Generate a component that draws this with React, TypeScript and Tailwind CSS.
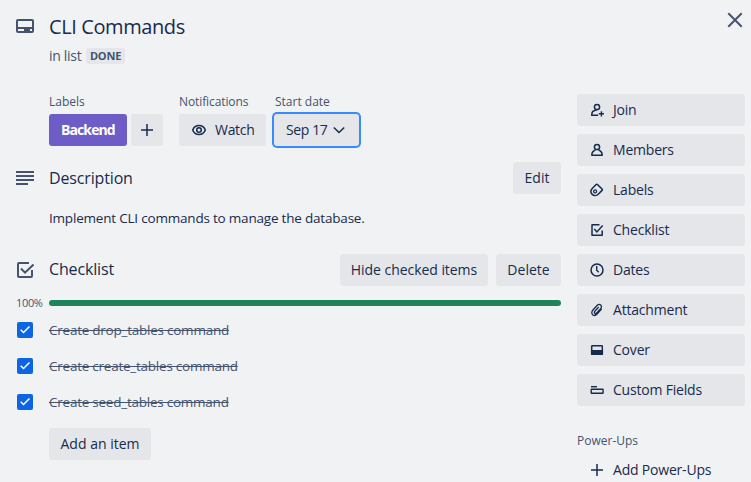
import type { ReactNode } from "react";

function Svg({ size = 16, children }: { size?: number; children: ReactNode }) {
  return (
    <svg
      width={size}
      height={size}
      viewBox={`0 0 ${size} ${size}`}
      fill="none"
      stroke="currentColor"
      strokeWidth="1.5"
      className="block shrink-0"
    >
      {children}
    </svg>
  );
}

const icons = {
  join: (
    <Svg>
      <circle cx="8" cy="5" r="2.6" />
      <path d="M9.2 13.2H2.800V12.500c0-2.300 1.600-4 3.900-4.300l1-.2" />
      <path d="M12.400 9.200v5.200M9.800 11.800h5.200" strokeWidth="1.4" />
    </Svg>
  ),
  members: (
    <Svg>
      <circle cx="8" cy="5" r="2.6" />
      <path d="M6.4 8C4.300 8.700 2.800 10.600 2.800 13.200h10.400c0-2.600-1.500-4.500-3.600-5.200" strokeLinejoin="round" />
    </Svg>
  ),
  label: (
    <Svg>
      <path
        d="M8.500 2.500 13 7c.4.4.4 1 0 1.400l-3.500 3.600c-2 2-4.700 2-6.300.4s-1.600-4 0-5.900L7.100 2.500c.4-.4 1-.4 1.400 0Z"
        strokeLinejoin="round"
      />
      <circle cx="6.100" cy="9.400" r="1.500" strokeWidth="1.300" />
    </Svg>
  ),
  checklist: (
    <Svg>
      <path d="M10.500 2.800H3v10.500h10.200V8.500" strokeLinejoin="round" />
      <path d="m5.300 7 2.600 2.900L13.700 3.600" />
    </Svg>
  ),
  clock: (
    <Svg>
      <circle cx="8" cy="8" r="6" />
      <path d="M7.700 4v4.200l2 2" strokeWidth="1.400" />
    </Svg>
  ),
  attachment: (
    <Svg>
      <path
        d="M12.300 7.200 8.300 11.800c-1.300 1.500-3.300 2-4.600.9s-1.200-3.200.2-4.700l4.200-4.500c1-1.100 2.600-1.300 3.600-.4s1 2.400 0 3.500l-4 4.300c-.6.700-1.400.8-2 .3s-.5-1.300.1-2l3.500-3.700"
        strokeWidth="1.300"
        strokeLinecap="round"
      />
    </Svg>
  ),
  cover: (
    <Svg>
      <rect x="2.700" y="3.700" width="10.600" height="8.600" rx="0.600" />
      <path d="M2.700 8.700h10.600v3.600H2.700z" fill="currentColor" />
    </Svg>
  ),
  fields: (
    <Svg>
      <path d="M2 4.700h6" strokeWidth="1.400" />
      <rect x="2.200" y="7.200" width="11.900" height="4" rx="0.500" strokeWidth="1.400" />
    </Svg>
  ),
  plus: (
    <Svg>
      <path d="M8 2v12M2 8h12" />
    </Svg>
  ),
  eye: (
    <Svg>
      <path d="M1.700 8C2.700 5.200 5.100 3.400 8 3.400s5.300 1.800 6.300 4.600c-1 2.800-3.400 4.600-6.300 4.600S2.700 10.800 1.700 8Z" />
      <circle cx="8" cy="8" r="2.300" />
    </Svg>
  ),
};

const sidebar = [
  { icon: icons.join, name: "Join" },
  { icon: icons.members, name: "Members" },
  { icon: icons.label, name: "Labels" },
  { icon: icons.checklist, name: "Checklist" },
  { icon: icons.clock, name: "Dates" },
  { icon: icons.attachment, name: "Attachment" },
  { icon: icons.cover, name: "Cover" },
  { icon: icons.fields, name: "Custom Fields" },
];

const items = [
  "Create drop_tables command",
  "Create create_tables command",
  "Create seed_tables command",
];

function Button({ className, children }: { className: string; children: ReactNode }) {
  return (
    <button
      className={`flex h-8 shrink-0 items-center whitespace-nowrap rounded-[3px] bg-[#e4e6ea] text-sm font-medium text-[#172b4d] ${className}`}
    >
      {children}
    </button>
  );
}

function Caption({ className = "", children }: { className?: string; children: ReactNode }) {
  return (
    <h3 className={`h-5 whitespace-nowrap text-xs leading-[15px] font-medium text-[#44546f] ${className}`}>
      {children}
    </h3>
  );
}

export default function App() {
  return (
    <div className="flex h-[482px] w-[751px] flex-col overflow-hidden bg-[#f1f2f4] font-['Open_Sans','Noto_Sans',sans-serif] text-sm text-[#172b4d]">
      <header className="flex h-[94px] shrink-0 pt-[15px] pr-2 pl-4">
        <svg width="18" height="14" viewBox="0 0 18 14" className="mt-1 shrink-0 text-[#44546f]">
          <path
            fillRule="evenodd"
            fill="currentColor"
            d="M2 0h14a2 2 0 0 1 2 2v10a2 2 0 0 1-2 2H2a2 2 0 0 1-2-2V2a2 2 0 0 1 2-2Zm0 2v6h14V2H2Zm0 8v2h6v-2H2Zm12 0v2h2v-2h-2Z"
          />
        </svg>
        <div className="ml-[15px] flex-1">
          <h1 className="text-xl leading-6 font-medium tracking-[-0.4px]">CLI Commands</h1>
          <div className="mt-[7px] flex items-center text-[#44546f]">
            <span className="w-8 whitespace-nowrap leading-5 tracking-[-0.3px]">in list</span>
            <span className="ml-[5px] flex h-4 w-[39px] items-center justify-center rounded-[3px] bg-[#e4e6ea] text-[11px] font-bold tracking-[-0.2px]">
              DONE
            </span>
          </div>
        </div>
        <svg width="16" height="16" viewBox="0 0 16 16" className="mt-[-3px] shrink-0 text-[#44546f]" stroke="currentColor" strokeWidth="2">
          <path d="m1.300 1.300 13.400 13.400M14.700 1.300 1.300 14.700" />
        </svg>
      </header>
      <div className="flex flex-1">
        <main className="w-[561px] pl-4">
          <div className="flex gap-2 pl-[33px]">
            <section className="mr-2">
              <Caption>Labels</Caption>
              <div className="flex gap-1">
                <div className="flex h-8 w-[78px] items-center rounded-[3px] bg-[#6e5dc6] pl-3 font-bold tracking-[-0.9px] text-white">
                  Backend
                </div>
                <Button className="w-8 justify-center">{icons.plus}</Button>
              </div>
            </section>
            <section className="w-[87px]">
              <Caption className="tracking-[-0.1px]">Notifications</Caption>
              <Button className="w-[87px] gap-2 pl-3">
                {icons.eye}
                <span className="tracking-[-0.3px]">Watch</span>
              </Button>
            </section>
            <section>
              <Caption className="pl-px">Start date</Caption>
              <Button className="w-[85px] gap-1 pl-3 ring-2 ring-[#388bff]">
                <span className="w-[41px] tracking-[-0.4px]">Sep 17</span>
                <Svg>
                  <path d="m2.800 5.500 5.200 5 5.200-5" />
                </Svg>
              </Button>
            </section>
          </div>

          <section className="mt-4">
            <div className="flex items-center">
              <svg width="18" height="14" viewBox="0 0 18 14" className="text-[#44546f]" stroke="currentColor" strokeWidth="2">
                <path d="M0 1h18M0 5h18M0 9h18M0 13h12" />
              </svg>
              <h2 className="ml-[15px] flex-1 text-base font-medium tracking-[-0.15px]">Description</h2>
              <Button className="w-12 justify-center">Edit</Button>
            </div>
            <p className="mt-[14px] ml-[33px] text-[13.5px] leading-5 tracking-[-0.2px]">
              Implement CLI commands to manage the database.
            </p>
          </section>

          <section className="mt-[26px]">
            <div className="flex items-center gap-2">
              <svg width="18" height="16" viewBox="0 0 18 16" className="text-[#44546f]" fill="none" stroke="currentColor" strokeWidth="2">
                <path d="M13 1H3a1 1 0 0 0-1 1v12a1 1 0 0 0 1 1h12a1 1 0 0 0 1-1V8" />
                <path d="m5 6.500 4 4.200 8.500-8.200" />
              </svg>
              <h2 className="mb-0.5 ml-[7px] flex-1 text-base font-medium tracking-[-0.15px]">Checklist</h2>
              <Button className="w-[148px] justify-center tracking-[-0.05px]">Hide checked items</Button>
              <Button className="w-[65px] justify-center">Delete</Button>
            </div>
            <div className="mt-[9px] flex h-4 items-center">
              <span className="w-[33px] text-[11px] tracking-[-0.35px] text-[#44546f]">100%</span>
              <div className="h-1.5 flex-1 rounded-full bg-[#1f845a]" />
            </div>
            <ul className="mt-[1px]">
              {items.map((item) => (
                <li key={item} className="flex h-9 items-center">
                  <span className="ml-px flex size-4 items-center justify-center rounded-[2px] bg-[#0c66e4] text-white">
                    <svg width="12" height="12" viewBox="0 0 12 12" fill="none" stroke="currentColor" strokeWidth="1.500">
                      <path d="m1.700 5.700 2.800 2.800 6-6" />
                    </svg>
                  </span>
                  <span className="ml-4 whitespace-nowrap text-[13.5px] leading-5 tracking-[-0.24px] text-[#44546f] line-through">
                    {item}
                  </span>
                </li>
              ))}
            </ul>
            <Button className="mt-2 ml-[33px] w-[102px] justify-center">Add an item</Button>
          </section>
        </main>

        <aside className="ml-4 w-[168px]">
          <nav className="flex flex-col gap-2">
            {sidebar.map(({ icon, name }) => (
              <Button key={name} className="w-full gap-2 pl-3">
                {icon}
                <span className="tracking-[-0.2px]">{name}</span>
              </Button>
            ))}
          </nav>
          <Caption className="mt-[27px] mb-px">Power-Ups</Caption>
          <button className="flex h-8 items-center gap-2 pl-3 font-medium">
            {icons.plus}
            <span className="tracking-[-0.2px]">Add Power-Ups</span>
          </button>
        </aside>
      </div>
    </div>
  );
}
